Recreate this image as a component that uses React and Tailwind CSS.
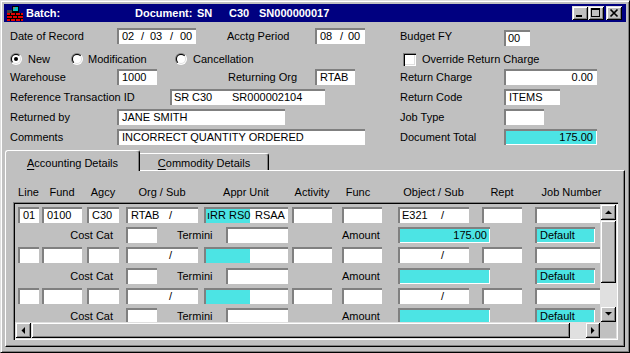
import React from 'react'

const CYAN = 'bg-[#4ce4e4]'
const DITHER = 'bg-[#e0e0e0]'
const RAISED = 'bg-[#c0c0c0] shadow-[inset_1px_1px_0_#dfdfdf,inset_-1px_-1px_0_#000,inset_2px_2px_0_#fff,inset_-2px_-2px_0_#808080]'

function Field({ className = '', children, cyan, right }) {
  return (
    <div
      className={`flex h-[16px] shrink-0 items-center whitespace-pre leading-[16px] shadow-[inset_2px_2px_0_#808080,inset_-1px_-1px_0_#fff] ${cyan ? CYAN : 'bg-white'} ${right ? 'justify-end pr-[4px]' : 'pl-[5px]'} ${className}`}
    >
      {children}
    </div>
  )
}

function Radio({ checked }) {
  return (
    <svg width="12" height="12" viewBox="0 0 12 12" className="shrink-0">
      <defs>
        <linearGradient id="radOuter" x1="0" y1="0" x2="1" y2="1">
          <stop offset="0.5" stopColor="#808080" />
          <stop offset="0.5" stopColor="#ffffff" />
        </linearGradient>
        <linearGradient id="radInner" x1="0" y1="0" x2="1" y2="1">
          <stop offset="0.5" stopColor="#000000" />
          <stop offset="0.5" stopColor="#dfdfdf" />
        </linearGradient>
      </defs>
      <circle cx="6" cy="6" r="6" fill="url(#radOuter)" />
      <circle cx="6" cy="6" r="5" fill="url(#radInner)" />
      <circle cx="6" cy="6" r="4" fill="#fff" />
      {checked && <circle cx="6" cy="6" r="2" fill="#000" />}
    </svg>
  )
}

function Arrow({ dir }) {
  const pts = {
    up: '0,4 7,4 3.5,0.5',
    down: '0,0 7,0 3.5,3.5',
    left: '4,0 4,7 0.5,3.5',
    right: '0,0 0,7 3.5,3.5',
  }[dir]
  const vertical = dir === 'up' || dir === 'down'
  return (
    <svg width={vertical ? 7 : 4} height={vertical ? 4 : 7} viewBox={vertical ? '0 0 7 4' : '0 0 4 7'}>
      <polygon points={pts} fill="#000" />
    </svg>
  )
}

function TitleIcon() {
  return (
    <svg width="16" height="16" viewBox="0 0 16 16" shapeRendering="crispEdges" className="shrink-0">
      <rect x="5" y="1" width="7" height="7" fill="#000" />
      <rect x="6" y="2" width="5" height="4" fill="#00c0c0" />
      <rect x="6" y="2" width="2" height="2" fill="#808080" />
      <rect x="0" y="5" width="5" height="3" fill="#404040" />
      <rect x="0" y="8" width="16" height="8" fill="#e00000" />
      <rect x="0" y="10" width="16" height="1" fill="#000" />
      <rect x="0" y="13" width="16" height="1" fill="#000" />
      <rect x="3" y="8" width="1" height="2" fill="#000" />
      <rect x="8" y="8" width="1" height="2" fill="#000" />
      <rect x="13" y="8" width="1" height="2" fill="#000" />
      <rect x="5" y="11" width="1" height="2" fill="#000" />
      <rect x="10" y="11" width="1" height="2" fill="#000" />
      <rect x="3" y="14" width="1" height="2" fill="#000" />
      <rect x="8" y="14" width="1" height="2" fill="#000" />
      <rect x="13" y="14" width="1" height="2" fill="#000" />
    </svg>
  )
}

function TitleButton({ children }) {
  return <div className={`flex h-[14px] w-[16px] items-center justify-center ${RAISED}`}>{children}</div>
}

function ApprUnit({ text, rest }) {
  return (
    <div className="flex h-[16px] w-[84px] shrink-0 items-start whitespace-pre bg-white shadow-[inset_2px_2px_0_#808080,inset_-1px_-1px_0_#fff]">
      <span className={`ml-[2px] mt-[2px] h-[14px] w-[44px] pl-[1px] leading-[12px] ${CYAN}`}>{text}</span>
      {rest && <span className="ml-[5px] leading-[16px]">{rest}</span>}
    </div>
  )
}

function LineRow({ first, className = '' }) {
  return (
    <div className={`flex h-[16px] items-center ${className}`}>
      <Field className="w-[21px]">{first ? '01' : ''}</Field>
      <Field className="ml-[3px] w-[40px]">{first ? '0100' : ''}</Field>
      <Field className="ml-[5px] w-[32px]">{first ? 'C30' : ''}</Field>
      <Field className="ml-[7px] w-[72px]">
        <span className="w-[38px]">{first ? 'RTAB' : ''}</span>
        <span>/</span>
      </Field>
      <div className="ml-[6px]">
        <ApprUnit text={first ? 'ıRR RS0' : ''} rest={first ? 'RSAA' : ''} />
      </div>
      <Field className="ml-[4px] w-[40px]" />
      <Field className="ml-[10px] w-[40px]" />
      <Field className="ml-[16px] w-[71px] !pl-[4px]">
        <span className="w-[39px]">{first ? 'E321' : ''}</span>
        <span>/</span>
      </Field>
      <Field className="ml-[13px] w-[40px]" />
      <Field className="ml-[13px] w-[65px]" />
    </div>
  )
}

function SubRow({ amount, className = '' }) {
  return (
    <div className={`flex h-[16px] items-center leading-[16px] ${className}`}>
      <span className="w-[95px] shrink-0 text-right">Cost Cat</span>
      <Field className="ml-[13px] w-[31px]" />
      <span className="ml-[20px] w-[49px] shrink-0">Termini</span>
      <Field className="w-[62px]" />
      <span className="ml-[54px] w-[56px] shrink-0">Amount</span>
      <Field cyan right className="w-[92px] !pr-[3px]">{amount}</Field>
      <Field cyan className="ml-[45px] w-[60px]">Default</Field>
    </div>
  )
}

export default function App() {
  return (
    <div className="h-[353px] w-[630px] overflow-hidden bg-[#c0c0c0] font-['Liberation_Sans',Arial,sans-serif] text-[11px] text-black">
      <div className="flex h-full w-full flex-col border border-t-[#dfdfdf] border-l-[#dfdfdf] border-r-black border-b-black p-[3px] shadow-[inset_1px_1px_0_#fff,inset_-1px_-1px_0_#808080]">
        {/* title bar */}
        <div className="flex h-[18px] shrink-0 items-center bg-[#000080] pl-[3px] font-bold leading-[16px] text-white whitespace-pre">
          <TitleIcon />
          <span className="ml-[3px] w-[109px]">Batch:</span>
          <span className="w-[62px]">Document:</span>
          <span className="w-[32px]">SN</span>
          <span className="w-[30px]">C30</span>
          <span>SN000000017</span>
          <div className="ml-auto mr-[4px] flex items-center">
            <TitleButton>
              <svg width="16" height="14" viewBox="0 0 16 14" shapeRendering="crispEdges">
                <rect x="4" y="9" width="6" height="2" fill="#000" />
              </svg>
            </TitleButton>
            <TitleButton>
              <svg width="16" height="14" viewBox="0 0 16 14" shapeRendering="crispEdges">
                <rect x="3" y="2" width="9" height="2" fill="#000" />
                <rect x="3" y="2" width="1" height="9" fill="#000" />
                <rect x="11" y="2" width="1" height="9" fill="#000" />
                <rect x="3" y="10" width="9" height="1" fill="#000" />
              </svg>
            </TitleButton>
            <div className="ml-[2px]">
              <TitleButton>
                <svg width="16" height="14" viewBox="0 0 16 14">
                  <path d="M4.5 3.5 L11.5 10.5 M11.5 3.5 L4.5 10.5" stroke="#000" strokeWidth="1.7" />
                </svg>
              </TitleButton>
            </div>
          </div>
        </div>

        {/* header form */}
        <div className="flex flex-col pl-[6px] leading-[16px]">
          <div className="mt-[6px] flex h-[16px] items-center">
            <span className="w-[107px] shrink-0">Date of Record</span>
            <Field className="w-[79px]">
              <span className="w-[19px]">02</span>
              <span className="w-[9px]">/</span>
              <span className="w-[20px]">03</span>
              <span className="w-[10px]">/</span>
              <span>00</span>
            </Field>
            <span className="ml-[31px] w-[88px] shrink-0">Acctg Period</span>
            <Field className="w-[50px]">
              <span className="w-[20px]">08</span>
              <span className="w-[8px]">/</span>
              <span>00</span>
            </Field>
            <span className="ml-[35px] w-[104px] shrink-0">Budget FY</span>
            <Field className="mt-[4px] w-[26px] !pl-[4px]">00</Field>
          </div>

          <div className="mt-[5px] flex h-[20px] items-center">
            <div className="flex w-[61px] items-center">
              <Radio checked />
              <span className="ml-[6px]">New</span>
            </div>
            <div className="flex w-[104px] items-center">
              <Radio />
              <span className="ml-[5px]">Modification</span>
            </div>
            <div className="flex w-[228px] items-center">
              <Radio />
              <span className="ml-[6px]">Cancellation</span>
            </div>
            <div className="flex items-center">
              <div className="h-[13px] w-[13px] bg-white shadow-[inset_1px_1px_0_#808080,inset_2px_2px_0_#000,inset_-1px_-1px_0_#fff,inset_-2px_-2px_0_#dfdfdf]" />
              <span className="ml-[6px]">Override Return Charge</span>
            </div>
          </div>

          <div className="flex h-[16px] items-center">
            <span className="w-[107px] shrink-0">Warehouse</span>
            <Field className="w-[40px]">1000</Field>
            <span className="ml-[71px] w-[87px] shrink-0">Returning Org</span>
            <Field className="w-[40px]">RTAB</Field>
            <span className="ml-[45px] w-[104px] shrink-0">Return Charge</span>
            <Field right className="w-[93px]">0.00</Field>
          </div>

          <div className="mt-[4px] flex h-[16px] items-center">
            <span className="w-[160px] shrink-0">Reference Transaction ID</span>
            <Field className="w-[155px] !pl-[4px]">
              <span className="w-[18px]">SR</span>
              <span className="w-[40px]">C30</span>
              <span>SR000002104</span>
            </Field>
            <span className="ml-[75px] w-[104px] shrink-0">Return Code</span>
            <Field className="w-[56px]">ITEMS</Field>
          </div>

          <div className="mt-[4px] flex h-[16px] items-center">
            <span className="w-[107px] shrink-0">Returned by</span>
            <Field className="w-[168px]">JANE SMITH</Field>
            <span className="ml-[115px] w-[104px] shrink-0">Job Type</span>
            <Field className="w-[40px]" />
          </div>

          <div className="mt-[4px] flex h-[16px] items-center">
            <span className="w-[107px] shrink-0">Comments</span>
            <Field className="w-[248px]">INCORRECT QUANTITY ORDERED</Field>
            <span className="ml-[35px] w-[104px] shrink-0">Document Total</span>
            <Field cyan right className="w-[93px]">175.00</Field>
          </div>
        </div>

        {/* tabs */}
        <div className="ml-[1px] mt-[5px] flex h-[20px] items-end leading-[16px]">
          <div className="relative z-10 -mb-[1px] h-[21px] w-[135px] rounded-t-[3px] border-l border-t border-r border-white border-r-black bg-[#c0c0c0] pt-[4px] text-center shadow-[inset_-1px_0_0_#808080]">
            <u className="underline-offset-2">A</u>ccounting Details
          </div>
          <div className="h-[17px] w-[129px] rounded-tr-[3px] border-t border-r border-white border-r-black pt-[1px] text-center shadow-[inset_-1px_0_0_#808080]">
            <u className="underline-offset-2">C</u>ommodity Details
          </div>
        </div>

        {/* panel */}
        <div className="ml-[1px] flex h-[177px] w-[620px] flex-col border border-t-white border-l-white border-r-black border-b-black leading-[16px] shadow-[inset_-1px_-1px_0_#808080]">
          <div className="ml-[12px] mt-[13px] flex h-[16px] items-center text-center">
            <span className="w-[21px] shrink-0">Line</span>
            <span className="ml-[3px] w-[40px] shrink-0">Fund</span>
            <span className="ml-[5px] w-[32px] shrink-0">Agcy</span>
            <span className="ml-[7px] w-[72px] shrink-0">Org / Sub</span>
            <span className="ml-[6px] w-[84px] shrink-0">Appr Unit</span>
            <span className="ml-[4px] w-[40px] shrink-0">Activity</span>
            <span className="ml-[10px] w-[32px] shrink-0">Func</span>
            <span className="ml-[24px] w-[71px] shrink-0">Object / Sub</span>
            <span className="ml-[13px] w-[40px] shrink-0">Rept</span>
            <span className="ml-[13px] w-[73px] shrink-0">Job Number</span>
          </div>

          <div className="ml-[7px] mt-[2px] flex h-[138px] w-[605px] flex-col p-[2px] shadow-[inset_1px_1px_0_#808080,inset_2px_2px_0_#000,inset_-1px_-1px_0_#fff,inset_-2px_-2px_0_#dfdfdf]">
            <div className="flex h-[118px]">
              <div className="h-full w-[585px] overflow-hidden pl-[3px] pt-[3px]">
                <LineRow first />
                <SubRow amount="175.00" className="mt-[4px]" />
                <LineRow className="mt-[4px]" />
                <SubRow className="mt-[5px]" />
                <LineRow className="mt-[4px]" />
                <SubRow className="mt-[4px]" />
              </div>
              <div className="flex w-[16px] flex-col">
                <div className={`flex h-[16px] items-center justify-center ${RAISED}`}>
                  <Arrow dir="up" />
                </div>
                <div className={`h-[63px] ${RAISED}`} />
                <div className={`h-[23px] ${DITHER}`} />
                <div className={`flex h-[16px] items-center justify-center ${RAISED}`}>
                  <Arrow dir="down" />
                </div>
              </div>
            </div>
            <div className="flex h-[16px]">
              <div className={`flex w-[16px] items-center justify-center ${RAISED}`}>
                <Arrow dir="left" />
              </div>
              <div className={`w-[539px] ${RAISED}`} />
              <div className={`w-[15px] ${DITHER}`} />
              <div className={`flex w-[15px] items-center justify-center ${RAISED}`}>
                <Arrow dir="right" />
              </div>
              <div className="w-[16px] bg-[#c0c0c0]" />
            </div>
          </div>
        </div>
      </div>
    </div>
  )
}
